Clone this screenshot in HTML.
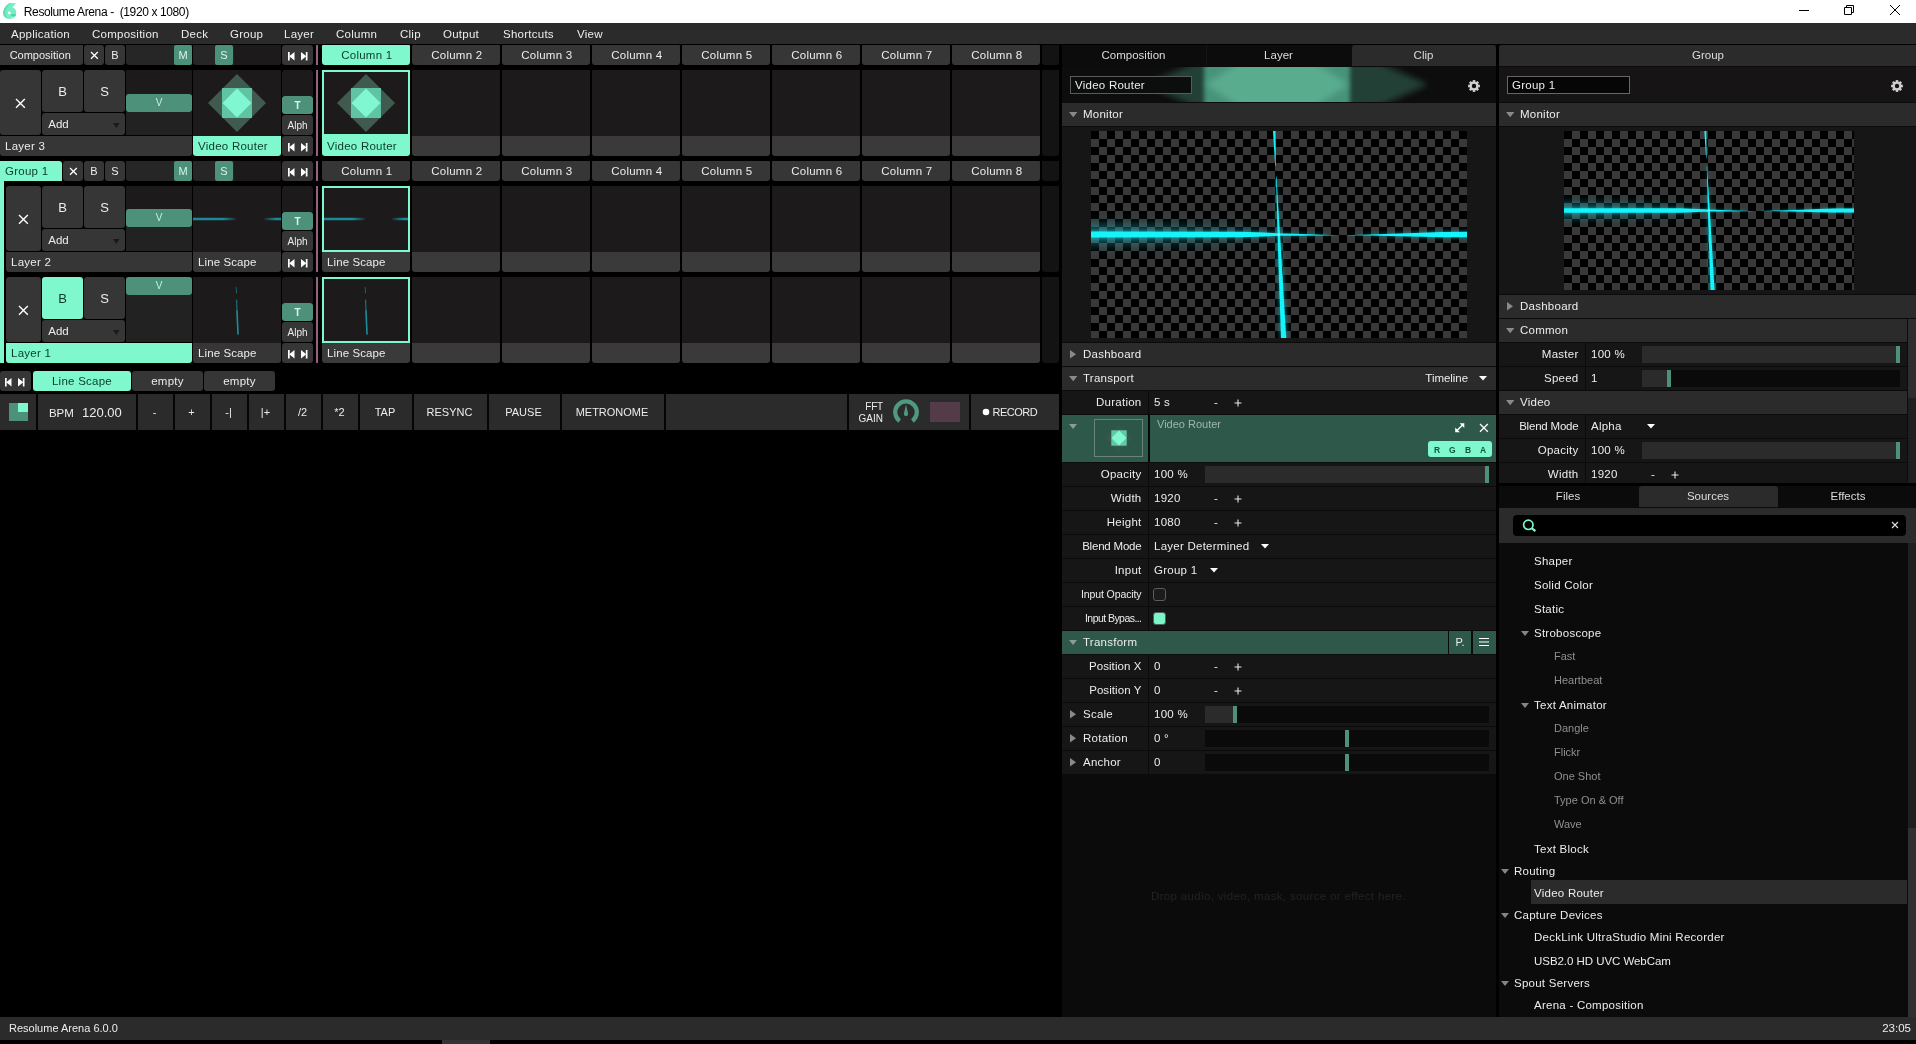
<!DOCTYPE html>
<html><head><meta charset="utf-8"><title>Resolume Arena</title>
<style>
html,body{margin:0;padding:0;background:#000;}
body{width:1916px;height:1044px;position:relative;overflow:hidden;font-family:"Liberation Sans",sans-serif;}
#app{position:absolute;left:0;top:0;width:1916px;height:1044px;will-change:transform;}
#app>div,#app>svg{position:absolute;}
.t{white-space:pre;}
svg{display:block;overflow:visible;}
</style></head><body><div id="app">
<div style="left:0px;top:0px;width:1916px;height:23px;background:#ffffff;"></div>
<svg style="left:0px;top:0px;" width="20" height="22" viewBox="0 0 20 22"><path d="M10.1 3L16 3.2L12.4 7.5C15 8.1 16.4 10.5 16.3 13C16.1 16.5 13.2 18.9 9.6 18.9C5.6 18.9 3 16.2 3.1 12.8C3.3 8.5 6.5 4.5 10.1 3Z" fill="#76eec4"/><path d="M3.6 10.5C4.6 7.3 7 4.4 10.1 3L11.2 3C8 5 5.6 8.6 5.3 12.5C5.1 15.2 6.2 17.3 8 18.7C5 18 3 15.8 3.1 12.8C3.1 12 3.3 11.2 3.6 10.5Z" fill="#5fdcb2"/><path d="M11.2 14.2L16.1 14.2C15.9 15.1 15.5 15.8 14.9 16.4L11.2 15.8Z" fill="#55cba3"/><circle cx="9.3" cy="12.9" r="1.4" fill="#f4fffb"/></svg>
<div class="t" style="top:2.5px;height:18px;line-height:18px;font-size:12.01px;color:#000;letter-spacing:-0.38px;left:23.8px;">Resolume Arena -  (1920 x 1080)</div>
<svg style="left:1799px;top:10px;" width="10" height="1" viewBox="0 0 10 1"><rect width="10" height="1" fill="#000"/></svg>
<svg style="left:1844px;top:5px;" width="10" height="10" viewBox="0 0 10 10"><path d="M2.5 2.5V0.5H9.5V7.5H7.5M0.5 2.5H7.5V9.5H0.5Z" stroke="#000" stroke-width="1" fill="none"/></svg>
<svg style="left:1890px;top:5px;" width="10" height="10" viewBox="0 0 10 10"><path d="M0 0L10 10M10 0L0 10" stroke="#000" stroke-width="1" fill="none"/></svg>
<div style="left:0px;top:23px;width:1916px;height:21px;background:#2b2b2b;"></div>
<div class="t" style="top:24.799999999999997px;height:18px;line-height:18px;font-size:11.5px;color:#ececec;letter-spacing:0.25px;left:11px;">Application</div>
<div class="t" style="top:24.799999999999997px;height:18px;line-height:18px;font-size:11.5px;color:#ececec;letter-spacing:0.25px;left:92px;">Composition</div>
<div class="t" style="top:24.799999999999997px;height:18px;line-height:18px;font-size:11.5px;color:#ececec;letter-spacing:0.25px;left:181px;">Deck</div>
<div class="t" style="top:24.799999999999997px;height:18px;line-height:18px;font-size:11.5px;color:#ececec;letter-spacing:0.25px;left:230px;">Group</div>
<div class="t" style="top:24.799999999999997px;height:18px;line-height:18px;font-size:11.5px;color:#ececec;letter-spacing:0.25px;left:284px;">Layer</div>
<div class="t" style="top:24.799999999999997px;height:18px;line-height:18px;font-size:11.5px;color:#ececec;letter-spacing:0.25px;left:336px;">Column</div>
<div class="t" style="top:24.799999999999997px;height:18px;line-height:18px;font-size:11.5px;color:#ececec;letter-spacing:0.25px;left:400px;">Clip</div>
<div class="t" style="top:24.799999999999997px;height:18px;line-height:18px;font-size:11.5px;color:#ececec;letter-spacing:0.25px;left:443px;">Output</div>
<div class="t" style="top:24.799999999999997px;height:18px;line-height:18px;font-size:11.5px;color:#ececec;letter-spacing:0.25px;left:503px;">Shortcuts</div>
<div class="t" style="top:24.799999999999997px;height:18px;line-height:18px;font-size:11.5px;color:#ececec;letter-spacing:0.25px;left:577px;">View</div>
<div style="left:0px;top:45px;width:83px;height:20px;background:#363636;border-radius:0 0 3px 0;"></div>
<div class="t" style="top:46.0px;height:18px;line-height:18px;font-size:11px;color:#ececec;left:-19.799999999999997px;width:120px;text-align:center;">Composition</div>
<div style="left:84px;top:45px;width:20px;height:20px;background:#363636;border-radius:3px;"></div>
<svg style="left:89.6px;top:50.6px;" width="8.8" height="8.8" viewBox="0 0 8.8 8.8"><path d="M1 1L7.8 7.8M7.8 1L1 7.8" stroke="#fff" stroke-width="1.3" fill="none"/></svg>
<div style="left:105px;top:45px;width:20px;height:20px;background:#363636;border-radius:3px;"></div>
<div class="t" style="top:46.0px;height:18px;line-height:18px;font-size:11px;color:#ececec;left:85.0px;width:60px;text-align:center;">B</div>
<div style="left:126px;top:45px;width:66px;height:20px;background:#262626;border-radius:0 0 3px 3px;"></div>
<div style="left:174px;top:45px;width:18px;height:20px;background:#4d917a;border-radius:2px;"></div>
<div class="t" style="top:46.0px;height:18px;line-height:18px;font-size:11px;color:#d6f5ea;left:154.0px;width:58px;text-align:center;">M</div>
<div style="left:193px;top:45px;width:88px;height:20px;background:#262626;border-radius:0 0 3px 3px;"></div>
<div style="left:234px;top:45px;width:47px;height:20px;background:#1c1a1a;border-radius:0 0 3px 0;"></div>
<div style="left:215px;top:45px;width:18px;height:20px;background:#4d917a;border-radius:2px;"></div>
<div class="t" style="top:46.0px;height:18px;line-height:18px;font-size:11px;color:#d6f5ea;left:195.0px;width:58px;text-align:center;">S</div>
<div style="left:282px;top:45px;width:31px;height:20px;background:#363636;border-radius:3px;"></div>
<svg style="left:287.75px;top:51.75px;" width="6.5" height="8.5" viewBox="0 0 6.5 8.5"><g fill="#fff"><rect x="0" y="0" width="1.7" height="8.5"/><path d="M6.5 0L6.5 8.5L1.2 4.25Z"/></g></svg>
<svg style="left:300.75px;top:51.75px;" width="6.5" height="8.5" viewBox="0 0 6.5 8.5"><g fill="#fff"><rect x="4.8" y="0" width="1.7" height="8.5"/><path d="M0 0L0 8.5L5.3 4.25Z"/></g></svg>
<div style="left:322px;top:45px;width:88px;height:20px;background:#7ff8ce;border-radius:1px 1px 3px 3px;"></div>
<div class="t" style="top:46.0px;height:18px;line-height:18px;font-size:11.5px;color:#0d3a2c;letter-spacing:0.25px;left:316.8px;width:100px;text-align:center;">Column 1</div>
<div style="left:412px;top:45px;width:88px;height:20px;background:#363636;border-radius:1px 1px 3px 3px;"></div>
<div class="t" style="top:46.0px;height:18px;line-height:18px;font-size:11.5px;color:#ececec;letter-spacing:0.25px;left:406.8px;width:100px;text-align:center;">Column 2</div>
<div style="left:502px;top:45px;width:88px;height:20px;background:#363636;border-radius:1px 1px 3px 3px;"></div>
<div class="t" style="top:46.0px;height:18px;line-height:18px;font-size:11.5px;color:#ececec;letter-spacing:0.25px;left:496.79999999999995px;width:100px;text-align:center;">Column 3</div>
<div style="left:592px;top:45px;width:88px;height:20px;background:#363636;border-radius:1px 1px 3px 3px;"></div>
<div class="t" style="top:46.0px;height:18px;line-height:18px;font-size:11.5px;color:#ececec;letter-spacing:0.25px;left:586.8px;width:100px;text-align:center;">Column 4</div>
<div style="left:682px;top:45px;width:88px;height:20px;background:#363636;border-radius:1px 1px 3px 3px;"></div>
<div class="t" style="top:46.0px;height:18px;line-height:18px;font-size:11.5px;color:#ececec;letter-spacing:0.25px;left:676.8px;width:100px;text-align:center;">Column 5</div>
<div style="left:772px;top:45px;width:88px;height:20px;background:#363636;border-radius:1px 1px 3px 3px;"></div>
<div class="t" style="top:46.0px;height:18px;line-height:18px;font-size:11.5px;color:#ececec;letter-spacing:0.25px;left:766.8px;width:100px;text-align:center;">Column 6</div>
<div style="left:862px;top:45px;width:88px;height:20px;background:#363636;border-radius:1px 1px 3px 3px;"></div>
<div class="t" style="top:46.0px;height:18px;line-height:18px;font-size:11.5px;color:#ececec;letter-spacing:0.25px;left:856.8px;width:100px;text-align:center;">Column 7</div>
<div style="left:952px;top:45px;width:88px;height:20px;background:#363636;border-radius:1px 1px 3px 3px;"></div>
<div class="t" style="top:46.0px;height:18px;line-height:18px;font-size:11.5px;color:#ececec;letter-spacing:0.25px;left:946.8px;width:100px;text-align:center;">Column 8</div>
<div style="left:1042px;top:45px;width:17px;height:20px;background:#131313;border-radius:0 0 3px 3px;"></div>
<div style="left:0px;top:70px;width:41px;height:65px;background:#363636;border-radius:3px;"></div>
<svg style="left:15.100000000000001px;top:97.8px;" width="10.8" height="10.8" viewBox="0 0 10.8 10.8"><path d="M1 1L9.8 9.8M9.8 1L1 9.8" stroke="#fff" stroke-width="1.4" fill="none"/></svg>
<div style="left:42px;top:70px;width:41px;height:42px;background:#363636;border-radius:3px;"></div>
<div class="t" style="top:82.8px;height:18px;line-height:18px;font-size:13px;color:#ececec;left:22.0px;width:81px;text-align:center;">B</div>
<div style="left:84px;top:70px;width:41px;height:42px;background:#363636;border-radius:3px;"></div>
<div class="t" style="top:82.8px;height:18px;line-height:18px;font-size:13px;color:#ececec;left:64.0px;width:81px;text-align:center;">S</div>
<div style="left:42px;top:113px;width:83px;height:22px;background:#363636;border-radius:3px;"></div>
<div class="t" style="top:114.8px;height:18px;line-height:18px;font-size:11.5px;color:#ececec;left:48.3px;">Add</div>
<svg style="left:112.6px;top:122.8px;" width="6.6" height="5" viewBox="0 0 6.6 5"><path d="M0 0H6.6L3.3 5Z" fill="#1a1a1a"/></svg>
<div style="left:126px;top:70px;width:66px;height:65px;background:#1c1a1a;"></div>
<div style="left:126px;top:112px;width:66px;height:23px;background:#232222;"></div>
<div style="left:126px;top:94px;width:66px;height:18px;background:#4d917a;border-radius:3px;"></div>
<div class="t" style="top:94.0px;height:18px;line-height:18px;font-size:10px;color:#c9efe2;left:106.0px;width:106px;text-align:center;">V</div>
<div style="left:193px;top:70px;width:88px;height:66px;background:#1c1a1a;"></div>
<div style="left:282px;top:70px;width:31px;height:26px;background:#1c1a1a;border-radius:3px 3px 0 0;"></div>
<div style="left:282px;top:96px;width:31px;height:18px;background:#4d917a;border-radius:3px;"></div>
<div class="t" style="top:96.5px;height:18px;line-height:18px;font-size:10px;color:#d6f5ea;font-weight:bold;left:262.0px;width:71px;text-align:center;">T</div>
<div style="left:282px;top:115px;width:31px;height:20px;background:#363636;border-radius:3px;"></div>
<div class="t" style="top:116.8px;height:18px;line-height:18px;font-size:10px;color:#ececec;left:262.0px;width:71px;text-align:center;">Alph</div>
<div style="left:282px;top:136px;width:31px;height:20px;background:#363636;border-radius:3px;"></div>
<svg style="left:287.75px;top:142.75px;" width="6.5" height="8.5" viewBox="0 0 6.5 8.5"><g fill="#fff"><rect x="0" y="0" width="1.7" height="8.5"/><path d="M6.5 0L6.5 8.5L1.2 4.25Z"/></g></svg>
<svg style="left:300.75px;top:142.75px;" width="6.5" height="8.5" viewBox="0 0 6.5 8.5"><g fill="#fff"><rect x="4.8" y="0" width="1.7" height="8.5"/><path d="M0 0L0 8.5L5.3 4.25Z"/></g></svg>
<div style="left:0px;top:136px;width:192px;height:20px;background:#363636;border-radius:0 0 3px 3px;"></div>
<div class="t" style="top:137.0px;height:18px;line-height:18px;font-size:11.5px;color:#ececec;letter-spacing:0.25px;left:5px;">Layer 3</div>
<div style="left:412px;top:70px;width:88px;height:66px;background:#1c1a1a;"></div>
<div style="left:412px;top:136px;width:88px;height:20px;background:#3a3a3a;border-radius:0 0 3px 3px;"></div>
<div style="left:502px;top:70px;width:88px;height:66px;background:#1c1a1a;"></div>
<div style="left:502px;top:136px;width:88px;height:20px;background:#3a3a3a;border-radius:0 0 3px 3px;"></div>
<div style="left:592px;top:70px;width:88px;height:66px;background:#1c1a1a;"></div>
<div style="left:592px;top:136px;width:88px;height:20px;background:#3a3a3a;border-radius:0 0 3px 3px;"></div>
<div style="left:682px;top:70px;width:88px;height:66px;background:#1c1a1a;"></div>
<div style="left:682px;top:136px;width:88px;height:20px;background:#3a3a3a;border-radius:0 0 3px 3px;"></div>
<div style="left:772px;top:70px;width:88px;height:66px;background:#1c1a1a;"></div>
<div style="left:772px;top:136px;width:88px;height:20px;background:#3a3a3a;border-radius:0 0 3px 3px;"></div>
<div style="left:862px;top:70px;width:88px;height:66px;background:#1c1a1a;"></div>
<div style="left:862px;top:136px;width:88px;height:20px;background:#3a3a3a;border-radius:0 0 3px 3px;"></div>
<div style="left:952px;top:70px;width:88px;height:66px;background:#1c1a1a;"></div>
<div style="left:952px;top:136px;width:88px;height:20px;background:#3a3a3a;border-radius:0 0 3px 3px;"></div>
<div style="left:1042px;top:70px;width:17px;height:86px;background:#131313;border-radius:0 0 3px 3px;"></div>
<svg style="left:208.0px;top:74.0px;" width="58.0" height="58.0" viewBox="0 0 58.0 58.0"><path d="M29.0 0L58.0 29.0L29.0 58.0L0 29.0Z" fill="#3f5b50"/><rect x="14.0" y="14.0" width="30.0" height="30.0" fill="#60c4a4"/><path d="M29.0 14.5L43.5 29.0L29.0 43.5L14.5 29.0Z" fill="#80f7d0"/></svg>
<div style="left:193px;top:136px;width:88px;height:20px;background:#7ff8ce;border-radius:0 0 3px 3px;"></div>
<div class="t" style="top:137.0px;height:18px;line-height:18px;font-size:11.5px;color:#0d3a2c;letter-spacing:0.25px;left:198px;">Video Router</div>
<div style="left:322px;top:70px;width:88px;height:86px;background:#7ff8ce;border-radius:0 0 3px 3px;"></div>
<div style="left:324px;top:72px;width:84px;height:62px;background:#1c1a1a;"></div>
<svg style="left:337.0px;top:74.0px;" width="58.0" height="58.0" viewBox="0 0 58.0 58.0"><path d="M29.0 0L58.0 29.0L29.0 58.0L0 29.0Z" fill="#3f5b50"/><rect x="14.0" y="14.0" width="30.0" height="30.0" fill="#60c4a4"/><path d="M29.0 14.5L43.5 29.0L29.0 43.5L14.5 29.0Z" fill="#80f7d0"/></svg>
<div class="t" style="top:137.0px;height:18px;line-height:18px;font-size:11.5px;color:#0d3a2c;letter-spacing:0.25px;left:327px;">Video Router</div>
<div style="left:0px;top:161px;width:62px;height:20px;background:#7ff8ce;border-radius:0 3px 0 0;"></div>
<div class="t" style="top:162.0px;height:18px;line-height:18px;font-size:11.5px;color:#0d3a2c;letter-spacing:0.25px;left:5px;">Group 1</div>
<div style="left:63px;top:161px;width:20px;height:20px;background:#363636;border-radius:3px;"></div>
<svg style="left:68.6px;top:166.6px;" width="8.8" height="8.8" viewBox="0 0 8.8 8.8"><path d="M1 1L7.8 7.8M7.8 1L1 7.8" stroke="#fff" stroke-width="1.3" fill="none"/></svg>
<div style="left:84px;top:161px;width:20px;height:20px;background:#363636;border-radius:3px;"></div>
<div class="t" style="top:162.0px;height:18px;line-height:18px;font-size:11px;color:#ececec;left:64.0px;width:60px;text-align:center;">B</div>
<div style="left:105px;top:161px;width:20px;height:20px;background:#363636;border-radius:3px;"></div>
<div class="t" style="top:162.0px;height:18px;line-height:18px;font-size:11px;color:#ececec;left:85.0px;width:60px;text-align:center;">S</div>
<div style="left:126px;top:161px;width:66px;height:20px;background:#262626;border-radius:0 0 3px 3px;"></div>
<div style="left:174px;top:161px;width:18px;height:20px;background:#4d917a;border-radius:2px;"></div>
<div class="t" style="top:162.0px;height:18px;line-height:18px;font-size:11px;color:#d6f5ea;left:154.0px;width:58px;text-align:center;">M</div>
<div style="left:193px;top:161px;width:88px;height:20px;background:#262626;border-radius:0 0 3px 3px;"></div>
<div style="left:234px;top:161px;width:47px;height:20px;background:#1c1a1a;border-radius:0 0 3px 0;"></div>
<div style="left:215px;top:161px;width:18px;height:20px;background:#4d917a;border-radius:2px;"></div>
<div class="t" style="top:162.0px;height:18px;line-height:18px;font-size:11px;color:#d6f5ea;left:195.0px;width:58px;text-align:center;">S</div>
<div style="left:282px;top:161px;width:31px;height:20px;background:#363636;border-radius:3px;"></div>
<svg style="left:287.75px;top:167.75px;" width="6.5" height="8.5" viewBox="0 0 6.5 8.5"><g fill="#fff"><rect x="0" y="0" width="1.7" height="8.5"/><path d="M6.5 0L6.5 8.5L1.2 4.25Z"/></g></svg>
<svg style="left:300.75px;top:167.75px;" width="6.5" height="8.5" viewBox="0 0 6.5 8.5"><g fill="#fff"><rect x="4.8" y="0" width="1.7" height="8.5"/><path d="M0 0L0 8.5L5.3 4.25Z"/></g></svg>
<div style="left:322px;top:161px;width:88px;height:20px;background:#363636;border-radius:1px 1px 3px 3px;"></div>
<div class="t" style="top:162.0px;height:18px;line-height:18px;font-size:11.5px;color:#ececec;letter-spacing:0.25px;left:316.8px;width:100px;text-align:center;">Column 1</div>
<div style="left:412px;top:161px;width:88px;height:20px;background:#363636;border-radius:1px 1px 3px 3px;"></div>
<div class="t" style="top:162.0px;height:18px;line-height:18px;font-size:11.5px;color:#ececec;letter-spacing:0.25px;left:406.8px;width:100px;text-align:center;">Column 2</div>
<div style="left:502px;top:161px;width:88px;height:20px;background:#363636;border-radius:1px 1px 3px 3px;"></div>
<div class="t" style="top:162.0px;height:18px;line-height:18px;font-size:11.5px;color:#ececec;letter-spacing:0.25px;left:496.79999999999995px;width:100px;text-align:center;">Column 3</div>
<div style="left:592px;top:161px;width:88px;height:20px;background:#363636;border-radius:1px 1px 3px 3px;"></div>
<div class="t" style="top:162.0px;height:18px;line-height:18px;font-size:11.5px;color:#ececec;letter-spacing:0.25px;left:586.8px;width:100px;text-align:center;">Column 4</div>
<div style="left:682px;top:161px;width:88px;height:20px;background:#363636;border-radius:1px 1px 3px 3px;"></div>
<div class="t" style="top:162.0px;height:18px;line-height:18px;font-size:11.5px;color:#ececec;letter-spacing:0.25px;left:676.8px;width:100px;text-align:center;">Column 5</div>
<div style="left:772px;top:161px;width:88px;height:20px;background:#363636;border-radius:1px 1px 3px 3px;"></div>
<div class="t" style="top:162.0px;height:18px;line-height:18px;font-size:11.5px;color:#ececec;letter-spacing:0.25px;left:766.8px;width:100px;text-align:center;">Column 6</div>
<div style="left:862px;top:161px;width:88px;height:20px;background:#363636;border-radius:1px 1px 3px 3px;"></div>
<div class="t" style="top:162.0px;height:18px;line-height:18px;font-size:11.5px;color:#ececec;letter-spacing:0.25px;left:856.8px;width:100px;text-align:center;">Column 7</div>
<div style="left:952px;top:161px;width:88px;height:20px;background:#363636;border-radius:1px 1px 3px 3px;"></div>
<div class="t" style="top:162.0px;height:18px;line-height:18px;font-size:11.5px;color:#ececec;letter-spacing:0.25px;left:946.8px;width:100px;text-align:center;">Column 8</div>
<div style="left:1042px;top:161px;width:17px;height:20px;background:#131313;border-radius:0 0 3px 3px;"></div>
<div style="left:0px;top:181px;width:4px;height:182px;background:#7ff8ce;"></div>
<div style="left:6px;top:186px;width:35px;height:65px;background:#363636;border-radius:3px;"></div>
<svg style="left:18.1px;top:213.79999999999998px;" width="10.8" height="10.8" viewBox="0 0 10.8 10.8"><path d="M1 1L9.8 9.8M9.8 1L1 9.8" stroke="#fff" stroke-width="1.4" fill="none"/></svg>
<div style="left:42px;top:186px;width:41px;height:42px;background:#363636;border-radius:3px;"></div>
<div class="t" style="top:198.8px;height:18px;line-height:18px;font-size:13px;color:#ececec;left:22.0px;width:81px;text-align:center;">B</div>
<div style="left:84px;top:186px;width:41px;height:42px;background:#363636;border-radius:3px;"></div>
<div class="t" style="top:198.8px;height:18px;line-height:18px;font-size:13px;color:#ececec;left:64.0px;width:81px;text-align:center;">S</div>
<div style="left:42px;top:229px;width:83px;height:22px;background:#363636;border-radius:3px;"></div>
<div class="t" style="top:230.8px;height:18px;line-height:18px;font-size:11.5px;color:#ececec;left:48.3px;">Add</div>
<svg style="left:112.6px;top:238.8px;" width="6.6" height="5" viewBox="0 0 6.6 5"><path d="M0 0H6.6L3.3 5Z" fill="#1a1a1a"/></svg>
<div style="left:126px;top:186px;width:66px;height:65px;background:#1c1a1a;"></div>
<div style="left:126px;top:227px;width:66px;height:24px;background:#232222;"></div>
<div style="left:126px;top:209px;width:66px;height:18px;background:#4d917a;border-radius:3px;"></div>
<div class="t" style="top:209.0px;height:18px;line-height:18px;font-size:10px;color:#c9efe2;left:106.0px;width:106px;text-align:center;">V</div>
<div style="left:193px;top:186px;width:88px;height:66px;background:#1c1a1a;"></div>
<div style="left:282px;top:186px;width:31px;height:26px;background:#1c1a1a;border-radius:3px 3px 0 0;"></div>
<div style="left:282px;top:212px;width:31px;height:18px;background:#4d917a;border-radius:3px;"></div>
<div class="t" style="top:212.5px;height:18px;line-height:18px;font-size:10px;color:#d6f5ea;font-weight:bold;left:262.0px;width:71px;text-align:center;">T</div>
<div style="left:282px;top:231px;width:31px;height:20px;background:#363636;border-radius:3px;"></div>
<div class="t" style="top:232.8px;height:18px;line-height:18px;font-size:10px;color:#ececec;left:262.0px;width:71px;text-align:center;">Alph</div>
<div style="left:282px;top:252px;width:31px;height:20px;background:#363636;border-radius:3px;"></div>
<svg style="left:287.75px;top:258.75px;" width="6.5" height="8.5" viewBox="0 0 6.5 8.5"><g fill="#fff"><rect x="0" y="0" width="1.7" height="8.5"/><path d="M6.5 0L6.5 8.5L1.2 4.25Z"/></g></svg>
<svg style="left:300.75px;top:258.75px;" width="6.5" height="8.5" viewBox="0 0 6.5 8.5"><g fill="#fff"><rect x="4.8" y="0" width="1.7" height="8.5"/><path d="M0 0L0 8.5L5.3 4.25Z"/></g></svg>
<div style="left:6px;top:252px;width:186px;height:20px;background:#363636;border-radius:0 0 3px 3px;"></div>
<div class="t" style="top:253.0px;height:18px;line-height:18px;font-size:11.5px;color:#ececec;letter-spacing:0.25px;left:11px;">Layer 2</div>
<div style="left:412px;top:186px;width:88px;height:66px;background:#1c1a1a;"></div>
<div style="left:412px;top:252px;width:88px;height:20px;background:#3a3a3a;border-radius:0 0 3px 3px;"></div>
<div style="left:502px;top:186px;width:88px;height:66px;background:#1c1a1a;"></div>
<div style="left:502px;top:252px;width:88px;height:20px;background:#3a3a3a;border-radius:0 0 3px 3px;"></div>
<div style="left:592px;top:186px;width:88px;height:66px;background:#1c1a1a;"></div>
<div style="left:592px;top:252px;width:88px;height:20px;background:#3a3a3a;border-radius:0 0 3px 3px;"></div>
<div style="left:682px;top:186px;width:88px;height:66px;background:#1c1a1a;"></div>
<div style="left:682px;top:252px;width:88px;height:20px;background:#3a3a3a;border-radius:0 0 3px 3px;"></div>
<div style="left:772px;top:186px;width:88px;height:66px;background:#1c1a1a;"></div>
<div style="left:772px;top:252px;width:88px;height:20px;background:#3a3a3a;border-radius:0 0 3px 3px;"></div>
<div style="left:862px;top:186px;width:88px;height:66px;background:#1c1a1a;"></div>
<div style="left:862px;top:252px;width:88px;height:20px;background:#3a3a3a;border-radius:0 0 3px 3px;"></div>
<div style="left:952px;top:186px;width:88px;height:66px;background:#1c1a1a;"></div>
<div style="left:952px;top:252px;width:88px;height:20px;background:#3a3a3a;border-radius:0 0 3px 3px;"></div>
<div style="left:1042px;top:186px;width:17px;height:86px;background:#131313;border-radius:0 0 3px 3px;"></div>
<div style="left:193px;top:252px;width:88px;height:20px;background:#363636;border-radius:0 0 3px 3px;"></div>
<div class="t" style="top:253.0px;height:18px;line-height:18px;font-size:11.5px;color:#ececec;letter-spacing:0.1px;left:198px;">Line Scape</div>
<div style="left:322px;top:186px;width:88px;height:66px;background:#7ff8ce;"></div>
<div style="left:324px;top:188px;width:84px;height:62px;background:#1c1a1a;"></div>
<div style="left:322px;top:252px;width:88px;height:20px;background:#3a3a3a;border-radius:0 0 3px 3px;"></div>
<div class="t" style="top:253.0px;height:18px;line-height:18px;font-size:11.5px;color:#ececec;letter-spacing:0.1px;left:327px;">Line Scape</div>
<svg style="left:193px;top:217px;" width="88" height="4" viewBox="0 0 88 4"><defs><linearGradient id="hl193" x1="0" x2="1"><stop offset="0" stop-color="#1a9cae"/><stop offset="0.34" stop-color="#1a9cae"/><stop offset="0.5" stop-color="#1a9cae" stop-opacity="0"/><stop offset="0.8" stop-color="#1a9cae" stop-opacity="0"/><stop offset="0.95" stop-color="#1a9cae"/><stop offset="1" stop-color="#1a9cae"/></linearGradient></defs><rect x="0" y="0.4" width="88" height="3.2" fill="url(#hl193)" opacity="0.35"/><rect x="0" y="1.1" width="88" height="1.8" fill="url(#hl193)" opacity="0.85"/></svg>
<svg style="left:324px;top:217px;" width="84" height="4" viewBox="0 0 84 4"><defs><linearGradient id="hl324" x1="0" x2="1"><stop offset="0" stop-color="#1a9cae"/><stop offset="0.34" stop-color="#1a9cae"/><stop offset="0.5" stop-color="#1a9cae" stop-opacity="0"/><stop offset="0.8" stop-color="#1a9cae" stop-opacity="0"/><stop offset="0.95" stop-color="#1a9cae"/><stop offset="1" stop-color="#1a9cae"/></linearGradient></defs><rect x="0" y="0.4" width="84" height="3.2" fill="url(#hl324)" opacity="0.35"/><rect x="0" y="1.1" width="84" height="1.8" fill="url(#hl324)" opacity="0.85"/></svg>
<div style="left:6px;top:277px;width:35px;height:65px;background:#363636;border-radius:3px;"></div>
<svg style="left:18.1px;top:304.8px;" width="10.8" height="10.8" viewBox="0 0 10.8 10.8"><path d="M1 1L9.8 9.8M9.8 1L1 9.8" stroke="#fff" stroke-width="1.4" fill="none"/></svg>
<div style="left:42px;top:277px;width:41px;height:42px;background:#7ff8ce;border-radius:3px;"></div>
<div class="t" style="top:289.8px;height:18px;line-height:18px;font-size:13px;color:#0d3a2c;left:22.0px;width:81px;text-align:center;">B</div>
<div style="left:84px;top:277px;width:41px;height:42px;background:#363636;border-radius:3px;"></div>
<div class="t" style="top:289.8px;height:18px;line-height:18px;font-size:13px;color:#ececec;left:64.0px;width:81px;text-align:center;">S</div>
<div style="left:42px;top:320px;width:83px;height:22px;background:#363636;border-radius:3px;"></div>
<div class="t" style="top:321.8px;height:18px;line-height:18px;font-size:11.5px;color:#ececec;left:48.3px;">Add</div>
<svg style="left:112.6px;top:329.8px;" width="6.6" height="5" viewBox="0 0 6.6 5"><path d="M0 0H6.6L3.3 5Z" fill="#1a1a1a"/></svg>
<div style="left:126px;top:277px;width:66px;height:65px;background:#1c1a1a;"></div>
<div style="left:126px;top:295px;width:66px;height:47px;background:#232222;"></div>
<div style="left:126px;top:277px;width:66px;height:18px;background:#4d917a;border-radius:3px;"></div>
<div class="t" style="top:277.0px;height:18px;line-height:18px;font-size:10px;color:#c9efe2;left:106.0px;width:106px;text-align:center;">V</div>
<div style="left:193px;top:277px;width:88px;height:66px;background:#1c1a1a;"></div>
<div style="left:282px;top:277px;width:31px;height:26px;background:#1c1a1a;border-radius:3px 3px 0 0;"></div>
<div style="left:282px;top:303px;width:31px;height:18px;background:#4d917a;border-radius:3px;"></div>
<div class="t" style="top:303.5px;height:18px;line-height:18px;font-size:10px;color:#d6f5ea;font-weight:bold;left:262.0px;width:71px;text-align:center;">T</div>
<div style="left:282px;top:322px;width:31px;height:20px;background:#363636;border-radius:3px;"></div>
<div class="t" style="top:323.8px;height:18px;line-height:18px;font-size:10px;color:#ececec;left:262.0px;width:71px;text-align:center;">Alph</div>
<div style="left:282px;top:343px;width:31px;height:20px;background:#363636;border-radius:3px;"></div>
<svg style="left:287.75px;top:349.75px;" width="6.5" height="8.5" viewBox="0 0 6.5 8.5"><g fill="#fff"><rect x="0" y="0" width="1.7" height="8.5"/><path d="M6.5 0L6.5 8.5L1.2 4.25Z"/></g></svg>
<svg style="left:300.75px;top:349.75px;" width="6.5" height="8.5" viewBox="0 0 6.5 8.5"><g fill="#fff"><rect x="4.8" y="0" width="1.7" height="8.5"/><path d="M0 0L0 8.5L5.3 4.25Z"/></g></svg>
<div style="left:6px;top:343px;width:186px;height:20px;background:#7ff8ce;border-radius:0 0 3px 3px;"></div>
<div class="t" style="top:344.0px;height:18px;line-height:18px;font-size:11.5px;color:#0d3a2c;letter-spacing:0.25px;left:11px;">Layer 1</div>
<div style="left:412px;top:277px;width:88px;height:66px;background:#1c1a1a;"></div>
<div style="left:412px;top:343px;width:88px;height:20px;background:#3a3a3a;border-radius:0 0 3px 3px;"></div>
<div style="left:502px;top:277px;width:88px;height:66px;background:#1c1a1a;"></div>
<div style="left:502px;top:343px;width:88px;height:20px;background:#3a3a3a;border-radius:0 0 3px 3px;"></div>
<div style="left:592px;top:277px;width:88px;height:66px;background:#1c1a1a;"></div>
<div style="left:592px;top:343px;width:88px;height:20px;background:#3a3a3a;border-radius:0 0 3px 3px;"></div>
<div style="left:682px;top:277px;width:88px;height:66px;background:#1c1a1a;"></div>
<div style="left:682px;top:343px;width:88px;height:20px;background:#3a3a3a;border-radius:0 0 3px 3px;"></div>
<div style="left:772px;top:277px;width:88px;height:66px;background:#1c1a1a;"></div>
<div style="left:772px;top:343px;width:88px;height:20px;background:#3a3a3a;border-radius:0 0 3px 3px;"></div>
<div style="left:862px;top:277px;width:88px;height:66px;background:#1c1a1a;"></div>
<div style="left:862px;top:343px;width:88px;height:20px;background:#3a3a3a;border-radius:0 0 3px 3px;"></div>
<div style="left:952px;top:277px;width:88px;height:66px;background:#1c1a1a;"></div>
<div style="left:952px;top:343px;width:88px;height:20px;background:#3a3a3a;border-radius:0 0 3px 3px;"></div>
<div style="left:1042px;top:277px;width:17px;height:86px;background:#131313;border-radius:0 0 3px 3px;"></div>
<div style="left:193px;top:343px;width:88px;height:20px;background:#363636;border-radius:0 0 3px 3px;"></div>
<div class="t" style="top:344.0px;height:18px;line-height:18px;font-size:11.5px;color:#ececec;letter-spacing:0.1px;left:198px;">Line Scape</div>
<div style="left:322px;top:277px;width:88px;height:66px;background:#7ff8ce;"></div>
<div style="left:324px;top:279px;width:84px;height:62px;background:#1c1a1a;"></div>
<div style="left:322px;top:343px;width:88px;height:20px;background:#3a3a3a;border-radius:0 0 3px 3px;"></div>
<div class="t" style="top:344.0px;height:18px;line-height:18px;font-size:11.5px;color:#ececec;letter-spacing:0.1px;left:327px;">Line Scape</div>
<svg style="left:234px;top:287px;" width="8" height="50" viewBox="0 0 8 50"><g stroke="#1c9aab" fill="none" stroke-linecap="round" opacity="0.9"><path d="M2.2 0.5L2.5 6" stroke-width="0.9" opacity="0.7"/><path d="M2.6 13L3 24" stroke-width="1.1" opacity="0.8"/><path d="M3 24L4 47" stroke-width="1.6"/></g></svg>
<svg style="left:363px;top:287px;" width="8" height="50" viewBox="0 0 8 50"><g stroke="#1c9aab" fill="none" stroke-linecap="round" opacity="0.9"><path d="M2.2 0.5L2.5 6" stroke-width="0.9" opacity="0.7"/><path d="M2.6 13L3 24" stroke-width="1.1" opacity="0.8"/><path d="M3 24L4 47" stroke-width="1.6"/></g></svg>
<div style="left:316px;top:45px;width:2px;height:20px;background:#96607f;"></div>
<div style="left:316px;top:70px;width:2px;height:86px;background:#96607f;"></div>
<div style="left:316px;top:161px;width:2px;height:20px;background:#96607f;"></div>
<div style="left:316px;top:186px;width:2px;height:86px;background:#96607f;"></div>
<div style="left:316px;top:277px;width:2px;height:86px;background:#96607f;"></div>
<div style="left:0px;top:371px;width:31px;height:20px;background:#363636;border-radius:3px;"></div>
<svg style="left:5.449999999999999px;top:377.75px;" width="6.5" height="8.5" viewBox="0 0 6.5 8.5"><g fill="#fff"><rect x="0" y="0" width="1.7" height="8.5"/><path d="M6.5 0L6.5 8.5L1.2 4.25Z"/></g></svg>
<svg style="left:18.45px;top:377.75px;" width="6.5" height="8.5" viewBox="0 0 6.5 8.5"><g fill="#fff"><rect x="4.8" y="0" width="1.7" height="8.5"/><path d="M0 0L0 8.5L5.3 4.25Z"/></g></svg>
<div style="left:33px;top:371px;width:98px;height:20px;background:#7ff8ce;border-radius:3px;"></div>
<div class="t" style="top:372.0px;height:18px;line-height:18px;font-size:11.5px;color:#0d3a2c;letter-spacing:0.25px;left:13.0px;width:138px;text-align:center;">Line Scape</div>
<div style="left:132px;top:371px;width:71px;height:20px;background:#363636;border-radius:3px;"></div>
<div class="t" style="top:372.0px;height:18px;line-height:18px;font-size:11.5px;color:#ececec;letter-spacing:0.25px;left:112.0px;width:111px;text-align:center;">empty</div>
<div style="left:204px;top:371px;width:71px;height:20px;background:#363636;border-radius:3px;"></div>
<div class="t" style="top:372.0px;height:18px;line-height:18px;font-size:11.5px;color:#ececec;letter-spacing:0.25px;left:184.0px;width:111px;text-align:center;">empty</div>
<div style="left:0px;top:394px;width:1059px;height:36px;background:#2b2b2b;"></div>
<div style="left:36px;top:394px;width:1.5px;height:36px;background:#050505;"></div>
<div style="left:136px;top:394px;width:1.5px;height:36px;background:#050505;"></div>
<div style="left:173px;top:394px;width:1.5px;height:36px;background:#050505;"></div>
<div style="left:210px;top:394px;width:1.5px;height:36px;background:#050505;"></div>
<div style="left:247px;top:394px;width:1.5px;height:36px;background:#050505;"></div>
<div style="left:284px;top:394px;width:1.5px;height:36px;background:#050505;"></div>
<div style="left:321px;top:394px;width:1.5px;height:36px;background:#050505;"></div>
<div style="left:358px;top:394px;width:1.5px;height:36px;background:#050505;"></div>
<div style="left:412px;top:394px;width:1.5px;height:36px;background:#050505;"></div>
<div style="left:487px;top:394px;width:1.5px;height:36px;background:#050505;"></div>
<div style="left:560px;top:394px;width:1.5px;height:36px;background:#050505;"></div>
<div style="left:664px;top:394px;width:1.5px;height:36px;background:#050505;"></div>
<div style="left:847px;top:394px;width:1.5px;height:36px;background:#050505;"></div>
<div style="left:969px;top:394px;width:1.5px;height:36px;background:#050505;"></div>
<div style="left:9px;top:403px;width:19px;height:18px;background:#4d917a;"></div>
<div style="left:18px;top:403px;width:10px;height:9px;background:#7ff8ce;"></div>
<div class="t" style="top:404.0px;height:18px;line-height:18px;font-size:11.5px;color:#ececec;letter-spacing:-0.05px;left:49px;">BPM</div>
<div class="t" style="top:404.0px;height:18px;line-height:18px;font-size:13px;color:#ececec;left:82px;">120.00</div>
<div class="t" style="top:403.0px;height:18px;line-height:18px;font-size:11px;color:#ececec;left:94.5px;width:120px;text-align:center;">-</div>
<div class="t" style="top:403.0px;height:18px;line-height:18px;font-size:11px;color:#ececec;left:131.5px;width:120px;text-align:center;">+</div>
<div class="t" style="top:403.0px;height:18px;line-height:18px;font-size:11px;color:#ececec;left:168.5px;width:120px;text-align:center;">-|</div>
<div class="t" style="top:403.0px;height:18px;line-height:18px;font-size:11px;color:#ececec;left:205.5px;width:120px;text-align:center;">|+</div>
<div class="t" style="top:403.0px;height:18px;line-height:18px;font-size:11px;color:#ececec;left:242.5px;width:120px;text-align:center;">/2</div>
<div class="t" style="top:403.0px;height:18px;line-height:18px;font-size:11px;color:#ececec;left:279.5px;width:120px;text-align:center;">*2</div>
<div class="t" style="top:403.0px;height:18px;line-height:18px;font-size:11px;color:#ececec;left:325.0px;width:120px;text-align:center;">TAP</div>
<div class="t" style="top:403.0px;height:18px;line-height:18px;font-size:11px;color:#ececec;left:389.5px;width:120px;text-align:center;">RESYNC</div>
<div class="t" style="top:403.0px;height:18px;line-height:18px;font-size:11px;color:#ececec;left:463.5px;width:120px;text-align:center;">PAUSE</div>
<div class="t" style="top:403.0px;height:18px;line-height:18px;font-size:11px;color:#ececec;left:552.0px;width:120px;text-align:center;">METRONOME</div>
<div class="t" style="top:398.0px;height:18px;line-height:18px;font-size:10px;color:#ececec;letter-spacing:-0.2px;right:1033px;text-align:right;">FFT</div>
<div class="t" style="top:410.0px;height:18px;line-height:18px;font-size:10px;color:#ececec;right:1033px;text-align:right;">GAIN</div>
<svg style="left:892px;top:398px;" width="28" height="28" viewBox="0 0 28 28"><path d="M7.65 22.94A10.8 10.8 0 1 1 20.35 22.94" stroke="#4d9a81" stroke-width="4.2" fill="none"/><path d="M14 6.6L16 15.3A2.1 2.1 0 1 1 12 15.3Z" fill="#4d9a81"/></svg>
<div style="left:930px;top:402px;width:30px;height:20px;background:#533b48;"></div>
<svg style="left:982.2px;top:407.6px;" width="8" height="8" viewBox="0 0 8 8"><circle cx="4" cy="4" r="3.3" fill="#fff"/></svg>
<div class="t" style="top:403.0px;height:18px;line-height:18px;font-size:11px;color:#ececec;letter-spacing:-0.5px;left:992.5px;">RECORD</div>
<div style="left:1062px;top:45px;width:434px;height:972px;background:#0c0b0b;"></div>
<div style="left:1062px;top:45px;width:144px;height:21px;background:#0d0c0c;"></div>
<div style="left:1207px;top:45px;width:144px;height:21px;background:#0d0c0c;"></div>
<div style="left:1352px;top:45px;width:144px;height:21px;background:#2b2b2b;border-radius:3px 3px 0 0;"></div>
<div style="left:1206px;top:45px;width:1px;height:21px;background:#161616;"></div>
<div class="t" style="top:46.0px;height:18px;line-height:18px;font-size:11.5px;color:#dcdcdc;left:1063.5px;width:140px;text-align:center;">Composition</div>
<div class="t" style="top:46.0px;height:18px;line-height:18px;font-size:11.5px;color:#dcdcdc;left:1208.5px;width:140px;text-align:center;">Layer</div>
<div class="t" style="top:46.0px;height:18px;line-height:18px;font-size:11.5px;color:#dcdcdc;left:1353.5px;width:140px;text-align:center;">Clip</div>
<div style="left:1062px;top:67px;width:434px;height:35px;background:#0e0d0d;"></div>
<svg style="left:1062px;top:67px" width="434" height="35" viewBox="1062 67 434 35"><defs><filter id="b3" x="-20%" y="-50%" width="140%" height="200%"><feGaussianBlur stdDeviation="3"/></filter><filter id="b2" x="-20%" y="-50%" width="140%" height="200%"><feGaussianBlur stdDeviation="2.2 0.1"/></filter><clipPath id="nrc"><rect x="1062" y="67" width="434" height="35"/></clipPath></defs><g clip-path="url(#nrc)"><path d="M1146 84.5L1196 62L1378 62L1428 84.5L1378 107L1196 107Z" fill="#243f36" filter="url(#b3)"/><rect x="1204" y="60" width="146" height="50" fill="#46937a" filter="url(#b2)"/><path d="M1206 84.5L1240 62L1314 62L1348 84.5L1314 107L1240 107Z" fill="#5aac8f" filter="url(#b3)"/></g></svg>
<div style="left:1070px;top:76px;width:122px;height:18px;background:#0c0e0d;box-sizing:border-box;border:1px solid #5a5a5a;"></div>
<div class="t" style="top:76.0px;height:18px;line-height:18px;font-size:11.5px;color:#ececec;letter-spacing:0.25px;left:1075px;">Video Router</div>
<svg style="left:1466.5px;top:78.5px;" width="14" height="14" viewBox="0 0 14 14"><g transform="translate(7 7)" fill="#cfcfcf"><rect x="-1.3" y="-5.9" width="2.6" height="3" transform="rotate(0)"/><rect x="-1.3" y="-5.9" width="2.6" height="3" transform="rotate(45)"/><rect x="-1.3" y="-5.9" width="2.6" height="3" transform="rotate(90)"/><rect x="-1.3" y="-5.9" width="2.6" height="3" transform="rotate(135)"/><rect x="-1.3" y="-5.9" width="2.6" height="3" transform="rotate(180)"/><rect x="-1.3" y="-5.9" width="2.6" height="3" transform="rotate(225)"/><rect x="-1.3" y="-5.9" width="2.6" height="3" transform="rotate(270)"/><rect x="-1.3" y="-5.9" width="2.6" height="3" transform="rotate(315)"/><path fill-rule="evenodd" d="M0 -4.5A4.5 4.5 0 1 0 0 4.5A4.5 4.5 0 1 0 0 -4.5ZM0 -2.2A2.2 2.2 0 1 1 0 2.2A2.2 2.2 0 1 1 0 -2.2Z"/></g></svg>
<div style="left:1062px;top:103px;width:434px;height:23px;background:#2b2b2b;"></div>
<svg style="left:1068.8px;top:112.10000000000001px;" width="8.4" height="5.2" viewBox="0 0 8.4 5.2"><path d="M0 0L8.4 0L4.2 5.2Z" fill="#8a8a8a"/></svg>
<div class="t" style="top:105.2px;height:18px;line-height:18px;font-size:11.5px;color:#ececec;letter-spacing:0.25px;left:1083px;">Monitor</div>
<div style="left:1062px;top:127px;width:434px;height:215px;background:#171616;"></div>
<svg style="left:1091px;top:131px" width="376" height="207" viewBox="0 0 376 207"><defs><pattern id="ckm1" width="16" height="16" patternUnits="userSpaceOnUse"><rect width="16" height="16" fill="#000"/><rect x="8" width="8" height="8" fill="#393939"/><rect y="8" width="8" height="8" fill="#393939"/></pattern><filter id="gm1" x="-10%" y="-400%" width="120%" height="900%"><feGaussianBlur stdDeviation="7.0 5.5"/></filter><filter id="em1" x="-10%" y="-300%" width="120%" height="700%"><feGaussianBlur stdDeviation="2.2"/></filter><filter id="sm1" x="-50%" y="-50%" width="200%" height="200%"><feGaussianBlur stdDeviation="0.60"/></filter><filter id="vm1" x="-400%" y="-5%" width="900%" height="110%"><feGaussianBlur stdDeviation="2.4"/></filter><linearGradient id="lgm1" x1="0" x2="1"><stop offset="0" stop-color="#22b9c6" stop-opacity="0.62"/><stop offset="0.5" stop-color="#22b9c6" stop-opacity="0.34"/><stop offset="1" stop-color="#22b9c6" stop-opacity="0"/></linearGradient><clipPath id="cm1"><rect width="376" height="207"/></clipPath></defs><rect width="376" height="207" fill="url(#ckm1)"/><g clip-path="url(#cm1)"><rect x="-20.0" y="94.5" width="208.0" height="18.0" fill="url(#lgm1)" filter="url(#gm1)"/><path d="M-7.5 100.60L150.4 100.70L173.0 101.50L188.0 102.20L210.6 103.06L233.1 103.87L246.3 104.43L246.3 104.43L233.1 104.57L210.6 104.66L188.0 104.80L173.0 105.50L150.4 106.30L-7.5 106.40ZM253.8 104.22L278.2 103.57L308.3 102.60L330.9 101.66L349.7 101.05L383.5 100.76L383.5 106.16L349.7 106.25L330.9 105.86L308.3 105.20L278.2 104.57L253.8 104.22Z" fill="#10c4d4" filter="url(#em1)" opacity="0.7"/><path d="M185.04 45.5L185.80 74.5L186.51 103.5L187.98 149.0L190.10 209.1L195.30 209.1L191.78 149.0L189.11 103.5L187.20 74.5L185.54 45.5Z" fill="#10c4d4" filter="url(#vm1)" opacity="0.75"/><path d="M-7.5 100.60L150.4 100.70L173.0 101.50L188.0 102.20L210.6 103.06L233.1 103.87L246.3 104.43L246.3 104.43L233.1 104.57L210.6 104.66L188.0 104.80L173.0 105.50L150.4 106.30L-7.5 106.40ZM253.8 104.22L278.2 103.57L308.3 102.60L330.9 101.66L349.7 101.05L383.5 100.76L383.5 106.16L349.7 106.25L330.9 105.86L308.3 105.20L278.2 104.57L253.8 104.22ZM181.89 -2.1L182.96 16.6L184.25 35.2L184.75 35.2L184.76 16.6L184.49 -2.1ZM185.04 45.5L185.80 74.5L186.51 103.5L187.98 149.0L190.10 209.1L195.30 209.1L191.78 149.0L189.11 103.5L187.20 74.5L185.54 45.5Z" fill="#12f4fa" filter="url(#sm1)"/><circle cx="187.8" cy="103.5" r="1.5" fill="#8ffbff" filter="url(#sm1)"/></g></svg>
<div style="left:1062px;top:343px;width:434px;height:23px;background:#2b2b2b;"></div>
<svg style="left:1069.8px;top:350.1px;" width="6" height="8.4" viewBox="0 0 6 8.4"><path d="M0 0L6 4.2L0 8.4Z" fill="#8a8a8a"/></svg>
<div class="t" style="top:345.2px;height:18px;line-height:18px;font-size:11.5px;color:#ececec;letter-spacing:0.25px;left:1083px;">Dashboard</div>
<div style="left:1062px;top:367px;width:434px;height:23px;background:#2b2b2b;"></div>
<svg style="left:1068.8px;top:376.09999999999997px;" width="8.4" height="5.2" viewBox="0 0 8.4 5.2"><path d="M0 0L8.4 0L4.2 5.2Z" fill="#8a8a8a"/></svg>
<div class="t" style="top:369.2px;height:18px;line-height:18px;font-size:11.5px;color:#ececec;letter-spacing:0.25px;left:1083px;">Transport</div>
<div class="t" style="top:369.0px;height:18px;line-height:18px;font-size:11.5px;color:#ececec;letter-spacing:-0.05px;right:448px;text-align:right;">Timeline</div>
<svg style="left:1479px;top:376px;" width="8" height="5" viewBox="0 0 8 5"><path d="M0 0H8L4 4.6Z" fill="#fff"/></svg>
<div style="left:1062px;top:391px;width:86px;height:23px;background:#171616;"></div>
<div style="left:1149px;top:391px;width:347px;height:23px;background:#171616;"></div>
<div class="t" style="top:393.2px;height:18px;line-height:18px;font-size:11.5px;color:#ececec;letter-spacing:0.25px;right:774.5px;text-align:right;">Duration</div>
<div class="t" style="top:393.2px;height:18px;line-height:18px;font-size:11.5px;color:#ececec;letter-spacing:0.25px;left:1154px;">5 s</div>
<div class="t" style="top:393.0px;height:18px;line-height:18px;font-size:11.5px;color:#ececec;letter-spacing:0.25px;left:1206.0px;width:20px;text-align:center;">-</div>
<svg style="left:1234px;top:399px;" width="8" height="8" viewBox="0 0 8 8"><path d="M4 0.5V7.5M0.5 4H7.5" stroke="#e8e8e8" stroke-width="1.1" fill="none"/></svg>
<div style="left:1062px;top:415px;width:434px;height:47px;background:#2d584a;"></div>
<div style="left:1148.3px;top:415px;width:1.5px;height:47px;background:#060606;"></div>
<svg style="left:1069px;top:424.2px;" width="8" height="5" viewBox="0 0 8 5"><path d="M0 0L8 0L4 5Z" fill="#8a9d95"/></svg>
<div style="left:1094px;top:419px;width:49px;height:38px;background:#2c5648;box-sizing:border-box;border:1px solid #6a8279;"></div>
<svg style="left:1104.5px;top:424px;" width="28" height="28" viewBox="0 0 28 28"><path d="M14 0.4L27.6 14L14 27.6L0.4 14Z" fill="#37574a"/><rect x="6.3" y="6.3" width="15.4" height="15.4" fill="#62c9a8"/><path d="M14 6.5L21.5 14L14 21.5L6.5 14Z" fill="#82f8d1"/></svg>
<div class="t" style="top:415.0px;height:18px;line-height:18px;font-size:11px;color:#a0b5ad;left:1157px;">Video Router</div>
<svg style="left:1454.5px;top:423px;" width="9.5" height="9.5" viewBox="0 0 9.5 9.5"><path d="M2 7.5L7.5 2" stroke="#fff" stroke-width="1.5" fill="none"/><path d="M4.6 0.2H9.3V4.9ZM0.2 4.6V9.3H4.9Z" fill="#fff"/></svg>
<svg style="left:1479.1px;top:422.70000000000005px;" width="9.8" height="9.8" viewBox="0 0 9.8 9.8"><path d="M1 1L8.8 8.8M8.8 1L1 8.8" stroke="#fff" stroke-width="1.3" fill="none"/></svg>
<div style="left:1428px;top:441px;width:64px;height:16px;background:#7ff8ce;border-radius:3px;"></div>
<div class="t" style="top:440.6px;height:18px;line-height:18px;font-size:8.5px;color:#115540;font-weight:bold;left:1427.2px;width:20px;text-align:center;">R</div>
<div class="t" style="top:440.6px;height:18px;line-height:18px;font-size:8.5px;color:#115540;font-weight:bold;left:1442.2px;width:20px;text-align:center;">G</div>
<div class="t" style="top:440.6px;height:18px;line-height:18px;font-size:8.5px;color:#115540;font-weight:bold;left:1458.2px;width:20px;text-align:center;">B</div>
<div class="t" style="top:440.6px;height:18px;line-height:18px;font-size:8.5px;color:#115540;font-weight:bold;left:1473.2px;width:20px;text-align:center;">A</div>
<div style="left:1062px;top:463px;width:86px;height:23px;background:#171616;"></div>
<div style="left:1149px;top:463px;width:347px;height:23px;background:#171616;"></div>
<div class="t" style="top:465.2px;height:18px;line-height:18px;font-size:11.5px;color:#ececec;letter-spacing:0.25px;right:774.5px;text-align:right;">Opacity</div>
<div class="t" style="top:465.2px;height:18px;line-height:18px;font-size:11.5px;color:#ececec;letter-spacing:0.25px;left:1154px;">100 %</div>
<div style="left:1205px;top:466px;width:284px;height:17px;background:#0a0a0a;"></div>
<div style="left:1205px;top:466px;width:280px;height:17px;background:#2b2b2b;"></div>
<div style="left:1485px;top:466px;width:4px;height:17px;background:#4d917a;"></div>
<div style="left:1062px;top:487px;width:86px;height:23px;background:#171616;"></div>
<div style="left:1149px;top:487px;width:347px;height:23px;background:#171616;"></div>
<div class="t" style="top:489.2px;height:18px;line-height:18px;font-size:11.5px;color:#ececec;letter-spacing:0.25px;right:774.5px;text-align:right;">Width</div>
<div class="t" style="top:489.2px;height:18px;line-height:18px;font-size:11.5px;color:#ececec;letter-spacing:0.25px;left:1154px;">1920</div>
<div class="t" style="top:489.0px;height:18px;line-height:18px;font-size:11.5px;color:#ececec;letter-spacing:0.25px;left:1206.0px;width:20px;text-align:center;">-</div>
<svg style="left:1234px;top:495px;" width="8" height="8" viewBox="0 0 8 8"><path d="M4 0.5V7.5M0.5 4H7.5" stroke="#e8e8e8" stroke-width="1.1" fill="none"/></svg>
<div style="left:1062px;top:511px;width:86px;height:23px;background:#171616;"></div>
<div style="left:1149px;top:511px;width:347px;height:23px;background:#171616;"></div>
<div class="t" style="top:513.2px;height:18px;line-height:18px;font-size:11.5px;color:#ececec;letter-spacing:0.25px;right:774.5px;text-align:right;">Height</div>
<div class="t" style="top:513.2px;height:18px;line-height:18px;font-size:11.5px;color:#ececec;letter-spacing:0.25px;left:1154px;">1080</div>
<div class="t" style="top:513.0px;height:18px;line-height:18px;font-size:11.5px;color:#ececec;letter-spacing:0.25px;left:1206.0px;width:20px;text-align:center;">-</div>
<svg style="left:1234px;top:519px;" width="8" height="8" viewBox="0 0 8 8"><path d="M4 0.5V7.5M0.5 4H7.5" stroke="#e8e8e8" stroke-width="1.1" fill="none"/></svg>
<div style="left:1062px;top:535px;width:86px;height:23px;background:#171616;"></div>
<div style="left:1149px;top:535px;width:347px;height:23px;background:#171616;"></div>
<div class="t" style="top:537.2px;height:18px;line-height:18px;font-size:11.5px;color:#ececec;letter-spacing:-0.2px;right:774.5px;text-align:right;">Blend Mode</div>
<div class="t" style="top:537.2px;height:18px;line-height:18px;font-size:11.5px;color:#ececec;letter-spacing:0.25px;left:1154px;">Layer Determined</div>
<svg style="left:1260.5px;top:544px;" width="8" height="5" viewBox="0 0 8 5"><path d="M0 0H8L4 4.6Z" fill="#fff"/></svg>
<div style="left:1062px;top:559px;width:86px;height:23px;background:#171616;"></div>
<div style="left:1149px;top:559px;width:347px;height:23px;background:#171616;"></div>
<div class="t" style="top:561.2px;height:18px;line-height:18px;font-size:11.5px;color:#ececec;letter-spacing:0.25px;right:774.5px;text-align:right;">Input</div>
<div class="t" style="top:561.2px;height:18px;line-height:18px;font-size:11.5px;color:#ececec;letter-spacing:0.25px;left:1154px;">Group 1</div>
<svg style="left:1209.5px;top:568px;" width="8" height="5" viewBox="0 0 8 5"><path d="M0 0H8L4 4.6Z" fill="#fff"/></svg>
<div style="left:1062px;top:583px;width:86px;height:23px;background:#171616;"></div>
<div style="left:1149px;top:583px;width:347px;height:23px;background:#171616;"></div>
<div class="t" style="top:585.2px;height:18px;line-height:18px;font-size:10.5px;color:#ececec;letter-spacing:-0.1px;right:774.5px;text-align:right;">Input Opacity</div>
<div style="left:1153px;top:588px;width:13px;height:13px;background:#1b1b1b;border-radius:3px;box-sizing:border-box;border:1px solid #5c5c5c;"></div>
<div style="left:1062px;top:607px;width:86px;height:23px;background:#171616;"></div>
<div style="left:1149px;top:607px;width:347px;height:23px;background:#171616;"></div>
<div class="t" style="top:609.2px;height:18px;line-height:18px;font-size:10.5px;color:#ececec;letter-spacing:-0.55px;right:774.5px;text-align:right;">Input Bypas...</div>
<div style="left:1153px;top:612px;width:13px;height:13px;background:#7cf5c9;border-radius:3px;box-sizing:border-box;border:1px solid #4e5e58;"></div>
<div style="left:1062px;top:631px;width:386px;height:23px;background:#2d584a;"></div>
<svg style="left:1069px;top:640.2px;" width="8" height="5" viewBox="0 0 8 5"><path d="M0 0L8 0L4 5Z" fill="#8a9d95"/></svg>
<div class="t" style="top:633.2px;height:18px;line-height:18px;font-size:11.5px;color:#ececec;letter-spacing:0.25px;left:1083px;">Transform</div>
<div style="left:1449px;top:631px;width:22px;height:23px;background:#2d584a;"></div>
<div class="t" style="top:633.0px;height:18px;line-height:18px;font-size:11px;color:#ececec;left:1449.0px;width:22px;text-align:center;">P.</div>
<div style="left:1473px;top:631px;width:23px;height:23px;background:#2d584a;"></div>
<svg style="left:1479px;top:638px;" width="10" height="8" viewBox="0 0 10 8"><path d="M0 0.5H10M0 4H10M0 7.5H10" stroke="#fff" stroke-width="1.2"/></svg>
<div style="left:1062px;top:655px;width:86px;height:23px;background:#171616;"></div>
<div style="left:1149px;top:655px;width:347px;height:23px;background:#171616;"></div>
<div class="t" style="top:657.2px;height:18px;line-height:18px;font-size:11.5px;color:#ececec;letter-spacing:0.08px;right:774.5px;text-align:right;">Position X</div>
<div class="t" style="top:657.2px;height:18px;line-height:18px;font-size:11.5px;color:#ececec;letter-spacing:0.25px;left:1154px;">0</div>
<div class="t" style="top:657.0px;height:18px;line-height:18px;font-size:11.5px;color:#ececec;letter-spacing:0.25px;left:1206.0px;width:20px;text-align:center;">-</div>
<svg style="left:1234px;top:663px;" width="8" height="8" viewBox="0 0 8 8"><path d="M4 0.5V7.5M0.5 4H7.5" stroke="#e8e8e8" stroke-width="1.1" fill="none"/></svg>
<div style="left:1062px;top:679px;width:86px;height:23px;background:#171616;"></div>
<div style="left:1149px;top:679px;width:347px;height:23px;background:#171616;"></div>
<div class="t" style="top:681.2px;height:18px;line-height:18px;font-size:11.5px;color:#ececec;letter-spacing:0.08px;right:774.5px;text-align:right;">Position Y</div>
<div class="t" style="top:681.2px;height:18px;line-height:18px;font-size:11.5px;color:#ececec;letter-spacing:0.25px;left:1154px;">0</div>
<div class="t" style="top:681.0px;height:18px;line-height:18px;font-size:11.5px;color:#ececec;letter-spacing:0.25px;left:1206.0px;width:20px;text-align:center;">-</div>
<svg style="left:1234px;top:687px;" width="8" height="8" viewBox="0 0 8 8"><path d="M4 0.5V7.5M0.5 4H7.5" stroke="#e8e8e8" stroke-width="1.1" fill="none"/></svg>
<div style="left:1062px;top:703px;width:86px;height:23px;background:#171616;"></div>
<div style="left:1149px;top:703px;width:347px;height:23px;background:#171616;"></div>
<svg style="left:1069.8px;top:710.0999999999999px;" width="6" height="8.4" viewBox="0 0 6 8.4"><path d="M0 0L6 4.2L0 8.4Z" fill="#8a8a8a"/></svg>
<div class="t" style="top:705.2px;height:18px;line-height:18px;font-size:11.5px;color:#ececec;letter-spacing:0.25px;left:1083px;">Scale</div>
<div class="t" style="top:705.2px;height:18px;line-height:18px;font-size:11.5px;color:#ececec;letter-spacing:0.25px;left:1154px;">100 %</div>
<div style="left:1205px;top:706px;width:284px;height:17px;background:#0a0a0a;"></div>
<div style="left:1205px;top:706px;width:28px;height:17px;background:#2b2b2b;"></div>
<div style="left:1233px;top:706px;width:4px;height:17px;background:#4d917a;"></div>
<div style="left:1062px;top:727px;width:86px;height:23px;background:#171616;"></div>
<div style="left:1149px;top:727px;width:347px;height:23px;background:#171616;"></div>
<svg style="left:1069.8px;top:734.0999999999999px;" width="6" height="8.4" viewBox="0 0 6 8.4"><path d="M0 0L6 4.2L0 8.4Z" fill="#8a8a8a"/></svg>
<div class="t" style="top:729.2px;height:18px;line-height:18px;font-size:11.5px;color:#ececec;letter-spacing:0.25px;left:1083px;">Rotation</div>
<div class="t" style="top:729.2px;height:18px;line-height:18px;font-size:11.5px;color:#ececec;letter-spacing:0.25px;left:1154px;">0 °</div>
<div style="left:1205px;top:730px;width:284px;height:17px;background:#0a0a0a;"></div>
<div style="left:1205px;top:730px;width:140px;height:17px;background:#0a0a0a;"></div>
<div style="left:1345px;top:730px;width:4px;height:17px;background:#4d917a;"></div>
<div style="left:1062px;top:751px;width:86px;height:23px;background:#171616;"></div>
<div style="left:1149px;top:751px;width:347px;height:23px;background:#171616;"></div>
<svg style="left:1069.8px;top:758.0999999999999px;" width="6" height="8.4" viewBox="0 0 6 8.4"><path d="M0 0L6 4.2L0 8.4Z" fill="#8a8a8a"/></svg>
<div class="t" style="top:753.2px;height:18px;line-height:18px;font-size:11.5px;color:#ececec;letter-spacing:0.25px;left:1083px;">Anchor</div>
<div class="t" style="top:753.2px;height:18px;line-height:18px;font-size:11.5px;color:#ececec;letter-spacing:0.25px;left:1154px;">0</div>
<div style="left:1205px;top:754px;width:284px;height:17px;background:#0a0a0a;"></div>
<div style="left:1205px;top:754px;width:140px;height:17px;background:#0a0a0a;"></div>
<div style="left:1345px;top:754px;width:4px;height:17px;background:#4d917a;"></div>
<div class="t" style="top:887.0px;height:18px;line-height:18px;font-size:11.5px;color:#242323;letter-spacing:0.34px;left:1151px;">Drop audio, video, mask, source or effect here.</div>
<div style="left:1499px;top:45px;width:417px;height:972px;background:#0c0b0b;"></div>
<div style="left:1499px;top:45px;width:417px;height:21px;background:#2b2b2b;border-radius:3px 0 0 0;"></div>
<div class="t" style="top:46.0px;height:18px;line-height:18px;font-size:11.5px;color:#dcdcdc;left:1658.0px;width:100px;text-align:center;">Group</div>
<div style="left:1499px;top:67px;width:417px;height:35px;background:#161414;"></div>
<div style="left:1507px;top:76px;width:123px;height:18px;background:#070606;box-sizing:border-box;border:1px solid #666;"></div>
<div class="t" style="top:76.0px;height:18px;line-height:18px;font-size:11.5px;color:#ececec;letter-spacing:0.25px;left:1512px;">Group 1</div>
<svg style="left:1889.5px;top:78.5px;" width="14" height="14" viewBox="0 0 14 14"><g transform="translate(7 7)" fill="#cfcfcf"><rect x="-1.3" y="-5.9" width="2.6" height="3" transform="rotate(0)"/><rect x="-1.3" y="-5.9" width="2.6" height="3" transform="rotate(45)"/><rect x="-1.3" y="-5.9" width="2.6" height="3" transform="rotate(90)"/><rect x="-1.3" y="-5.9" width="2.6" height="3" transform="rotate(135)"/><rect x="-1.3" y="-5.9" width="2.6" height="3" transform="rotate(180)"/><rect x="-1.3" y="-5.9" width="2.6" height="3" transform="rotate(225)"/><rect x="-1.3" y="-5.9" width="2.6" height="3" transform="rotate(270)"/><rect x="-1.3" y="-5.9" width="2.6" height="3" transform="rotate(315)"/><path fill-rule="evenodd" d="M0 -4.5A4.5 4.5 0 1 0 0 4.5A4.5 4.5 0 1 0 0 -4.5ZM0 -2.2A2.2 2.2 0 1 1 0 2.2A2.2 2.2 0 1 1 0 -2.2Z"/></g></svg>
<div style="left:1499px;top:103px;width:417px;height:23px;background:#2b2b2b;"></div>
<svg style="left:1505.8px;top:112.10000000000001px;" width="8.4" height="5.2" viewBox="0 0 8.4 5.2"><path d="M0 0L8.4 0L4.2 5.2Z" fill="#8a8a8a"/></svg>
<div class="t" style="top:105.2px;height:18px;line-height:18px;font-size:11.5px;color:#ececec;letter-spacing:0.25px;left:1520px;">Monitor</div>
<div style="left:1499px;top:127px;width:417px;height:167px;background:#171616;"></div>
<svg style="left:1564px;top:131px" width="290" height="159" viewBox="0 0 290 159"><defs><pattern id="ckm2" width="16" height="16" patternUnits="userSpaceOnUse"><rect width="16" height="16" fill="#000"/><rect x="8" width="8" height="8" fill="#393939"/><rect y="8" width="8" height="8" fill="#393939"/></pattern><filter id="gm2" x="-10%" y="-400%" width="120%" height="900%"><feGaussianBlur stdDeviation="5.4 4.2"/></filter><filter id="em2" x="-10%" y="-300%" width="120%" height="700%"><feGaussianBlur stdDeviation="1.7"/></filter><filter id="sm2" x="-50%" y="-50%" width="200%" height="200%"><feGaussianBlur stdDeviation="0.46"/></filter><filter id="vm2" x="-400%" y="-5%" width="900%" height="110%"><feGaussianBlur stdDeviation="1.9"/></filter><linearGradient id="lgm2" x1="0" x2="1"><stop offset="0" stop-color="#22b9c6" stop-opacity="0.62"/><stop offset="0.5" stop-color="#22b9c6" stop-opacity="0.34"/><stop offset="1" stop-color="#22b9c6" stop-opacity="0"/></linearGradient><clipPath id="cm2"><rect width="290" height="159"/></clipPath></defs><rect width="290" height="159" fill="url(#ckm2)"/><g clip-path="url(#cm2)"><rect x="-15.4" y="72.6" width="160.4" height="13.9" fill="url(#lgm2)" filter="url(#gm2)"/><path d="M-5.8 77.26L116.0 77.34L133.4 77.96L145.0 78.50L162.4 79.16L179.8 79.79L190.0 80.22L190.0 80.22L179.8 80.33L162.4 80.39L145.0 80.50L133.4 81.04L116.0 81.66L-5.8 81.74ZM195.8 80.05L214.6 79.56L237.8 78.80L255.2 78.08L269.7 77.61L295.8 77.38L295.8 81.55L269.7 81.62L255.2 81.32L237.8 80.81L214.6 80.33L195.8 80.05Z" fill="#10c4d4" filter="url(#em2)" opacity="0.7"/><path d="M142.72 35.0L143.30 57.2L143.85 79.5L144.98 114.5L146.62 160.6L150.63 160.6L147.92 114.5L145.86 79.5L144.38 57.2L143.10 35.0Z" fill="#10c4d4" filter="url(#vm2)" opacity="0.75"/><path d="M-5.8 77.26L116.0 77.34L133.4 77.96L145.0 78.50L162.4 79.16L179.8 79.79L190.0 80.22L190.0 80.22L179.8 80.33L162.4 80.39L145.0 80.50L133.4 81.04L116.0 81.66L-5.8 81.74ZM195.8 80.05L214.6 79.56L237.8 78.80L255.2 78.08L269.7 77.61L295.8 77.38L295.8 81.55L269.7 81.62L255.2 81.32L237.8 80.81L214.6 80.33L195.8 80.05ZM140.29 -1.6L141.12 12.7L142.11 27.0L142.50 27.0L142.50 12.7L142.29 -1.6ZM142.72 35.0L143.30 57.2L143.85 79.5L144.98 114.5L146.62 160.6L150.63 160.6L147.92 114.5L145.86 79.5L144.38 57.2L143.10 35.0Z" fill="#12f4fa" filter="url(#sm2)"/><circle cx="144.9" cy="79.5" r="1.2" fill="#8ffbff" filter="url(#sm2)"/></g></svg>
<div style="left:1499px;top:295px;width:417px;height:23px;background:#2b2b2b;"></div>
<svg style="left:1506.8px;top:302.1px;" width="6" height="8.4" viewBox="0 0 6 8.4"><path d="M0 0L6 4.2L0 8.4Z" fill="#8a8a8a"/></svg>
<div class="t" style="top:297.2px;height:18px;line-height:18px;font-size:11.5px;color:#ececec;letter-spacing:0.25px;left:1520px;">Dashboard</div>
<div style="left:1499px;top:319px;width:408px;height:23px;background:#2b2b2b;"></div>
<svg style="left:1505.8px;top:328.09999999999997px;" width="8.4" height="5.2" viewBox="0 0 8.4 5.2"><path d="M0 0L8.4 0L4.2 5.2Z" fill="#8a8a8a"/></svg>
<div class="t" style="top:321.2px;height:18px;line-height:18px;font-size:11.5px;color:#ececec;letter-spacing:0.25px;left:1520px;">Common</div>
<div style="left:1499px;top:343px;width:86px;height:23px;background:#171616;"></div>
<div style="left:1586px;top:343px;width:321px;height:23px;background:#171616;"></div>
<div class="t" style="top:345.2px;height:18px;line-height:18px;font-size:11.5px;color:#ececec;letter-spacing:0.25px;right:337.5px;text-align:right;">Master</div>
<div class="t" style="top:345.2px;height:18px;line-height:18px;font-size:11.5px;color:#ececec;letter-spacing:0.25px;left:1591px;">100 %</div>
<div style="left:1642px;top:346px;width:258px;height:17px;background:#0a0a0a;"></div>
<div style="left:1642px;top:346px;width:254px;height:17px;background:#2b2b2b;"></div>
<div style="left:1896px;top:346px;width:4px;height:17px;background:#4d917a;"></div>
<div style="left:1499px;top:367px;width:86px;height:23px;background:#171616;"></div>
<div style="left:1586px;top:367px;width:321px;height:23px;background:#171616;"></div>
<div class="t" style="top:369.2px;height:18px;line-height:18px;font-size:11.5px;color:#ececec;letter-spacing:0.25px;right:337.5px;text-align:right;">Speed</div>
<div class="t" style="top:369.2px;height:18px;line-height:18px;font-size:11.5px;color:#ececec;letter-spacing:0.25px;left:1591px;">1</div>
<div style="left:1642px;top:370px;width:258px;height:17px;background:#0a0a0a;"></div>
<div style="left:1642px;top:370px;width:25px;height:17px;background:#2b2b2b;"></div>
<div style="left:1667px;top:370px;width:4px;height:17px;background:#4d917a;"></div>
<div style="left:1499px;top:391px;width:408px;height:23px;background:#2b2b2b;"></div>
<svg style="left:1505.8px;top:400.09999999999997px;" width="8.4" height="5.2" viewBox="0 0 8.4 5.2"><path d="M0 0L8.4 0L4.2 5.2Z" fill="#8a8a8a"/></svg>
<div class="t" style="top:393.2px;height:18px;line-height:18px;font-size:11.5px;color:#ececec;letter-spacing:0.25px;left:1520px;">Video</div>
<div style="left:1499px;top:415px;width:86px;height:23px;background:#171616;"></div>
<div style="left:1586px;top:415px;width:321px;height:23px;background:#171616;"></div>
<div class="t" style="top:417.2px;height:18px;line-height:18px;font-size:11.5px;color:#ececec;letter-spacing:-0.2px;right:337.5px;text-align:right;">Blend Mode</div>
<div class="t" style="top:417.2px;height:18px;line-height:18px;font-size:11.5px;color:#ececec;letter-spacing:0.25px;left:1591px;">Alpha</div>
<svg style="left:1646.5px;top:424px;" width="8" height="5" viewBox="0 0 8 5"><path d="M0 0H8L4 4.6Z" fill="#fff"/></svg>
<div style="left:1499px;top:439px;width:86px;height:23px;background:#171616;"></div>
<div style="left:1586px;top:439px;width:321px;height:23px;background:#171616;"></div>
<div class="t" style="top:441.2px;height:18px;line-height:18px;font-size:11.5px;color:#ececec;letter-spacing:0.25px;right:337.5px;text-align:right;">Opacity</div>
<div class="t" style="top:441.2px;height:18px;line-height:18px;font-size:11.5px;color:#ececec;letter-spacing:0.25px;left:1591px;">100 %</div>
<div style="left:1642px;top:442px;width:258px;height:17px;background:#0a0a0a;"></div>
<div style="left:1642px;top:442px;width:254px;height:17px;background:#2b2b2b;"></div>
<div style="left:1896px;top:442px;width:4px;height:17px;background:#4d917a;"></div>
<div style="left:1499px;top:463px;width:86px;height:20px;background:#171616;"></div>
<div style="left:1586px;top:463px;width:321px;height:20px;background:#171616;"></div>
<div class="t" style="top:465.2px;height:18px;line-height:18px;font-size:11.5px;color:#ececec;letter-spacing:0.25px;right:337.5px;text-align:right;">Width</div>
<div class="t" style="top:465.2px;height:18px;line-height:18px;font-size:11.5px;color:#ececec;letter-spacing:0.25px;left:1591px;">1920</div>
<div class="t" style="top:465.0px;height:18px;line-height:18px;font-size:11.5px;color:#ececec;letter-spacing:0.25px;left:1643.0px;width:20px;text-align:center;">-</div>
<svg style="left:1671px;top:471px;" width="8" height="8" viewBox="0 0 8 8"><path d="M4 0.5V7.5M0.5 4H7.5" stroke="#e8e8e8" stroke-width="1.1" fill="none"/></svg>
<div style="left:1908px;top:319px;width:8px;height:164px;background:#1f1f1f;"></div>
<div style="left:1908px;top:319px;width:8px;height:79px;background:#2e2e2e;"></div>
<div style="left:1499px;top:483px;width:417px;height:3px;background:#000;"></div>
<div style="left:1499px;top:486px;width:139px;height:21px;background:#0c0b0b;border-radius:3px 3px 0 0;"></div>
<div style="left:1639px;top:486px;width:139px;height:21px;background:#2b2b2b;border-radius:3px 3px 0 0;"></div>
<div style="left:1779px;top:486px;width:137px;height:21px;background:#0c0b0b;border-radius:3px 0 0 0;"></div>
<div class="t" style="top:487.0px;height:18px;line-height:18px;font-size:11.5px;color:#dcdcdc;left:1508.0px;width:120px;text-align:center;">Files</div>
<div class="t" style="top:487.0px;height:18px;line-height:18px;font-size:11.5px;color:#dcdcdc;left:1648.0px;width:120px;text-align:center;">Sources</div>
<div class="t" style="top:487.0px;height:18px;line-height:18px;font-size:11.5px;color:#dcdcdc;left:1788.0px;width:120px;text-align:center;">Effects</div>
<div style="left:1499px;top:508px;width:417px;height:35px;background:#2b2b2b;"></div>
<div style="left:1513px;top:515px;width:393px;height:21px;background:#000;border-radius:4px;"></div>
<svg style="left:1522px;top:518px;" width="16" height="16" viewBox="0 0 16 16"><circle cx="6.3" cy="6.8" r="4.7" stroke="#7cf5c9" stroke-width="1.7" fill="none"/><path d="M9.9 10.3L13.4 13.2" stroke="#7cf5c9" stroke-width="2.2" stroke-linecap="butt"/></svg>
<svg style="left:1891px;top:521px;" width="8" height="8" viewBox="0 0 8 8"><path d="M1 1L7 7M7 1L1 7" stroke="#e0e0e0" stroke-width="1.1" fill="none"/></svg>
<div style="left:1499px;top:543px;width:417px;height:474px;background:#0c0b0b;"></div>
<div style="left:1908px;top:543px;width:8px;height:474px;background:#1f1f1f;"></div>
<div style="left:1908px;top:828px;width:8px;height:189px;background:#303030;"></div>
<div style="left:1531px;top:880px;width:376px;height:24px;background:#2b2b2b;"></div>
<div class="t" style="top:552.0px;height:18px;line-height:18px;font-size:11.5px;color:#ececec;letter-spacing:0.25px;left:1534px;">Shaper</div>
<div class="t" style="top:576.0px;height:18px;line-height:18px;font-size:11.5px;color:#ececec;letter-spacing:0.25px;left:1534px;">Solid Color</div>
<div class="t" style="top:600.0px;height:18px;line-height:18px;font-size:11.5px;color:#ececec;letter-spacing:0.25px;left:1534px;">Static</div>
<div class="t" style="top:624.0px;height:18px;line-height:18px;font-size:11.5px;color:#ececec;letter-spacing:0.25px;left:1534px;">Stroboscope</div>
<svg style="left:1521px;top:631.0px;" width="8" height="5" viewBox="0 0 8 5"><path d="M0 0L8 0L4 5Z" fill="#858585"/></svg>
<div class="t" style="top:647.0px;height:18px;line-height:18px;font-size:11px;color:#8f8f8f;left:1554px;">Fast</div>
<div class="t" style="top:671.0px;height:18px;line-height:18px;font-size:11px;color:#8f8f8f;left:1554px;">Heartbeat</div>
<div class="t" style="top:696.0px;height:18px;line-height:18px;font-size:11.5px;color:#ececec;letter-spacing:0.25px;left:1534px;">Text Animator</div>
<svg style="left:1521px;top:703.0px;" width="8" height="5" viewBox="0 0 8 5"><path d="M0 0L8 0L4 5Z" fill="#858585"/></svg>
<div class="t" style="top:719.0px;height:18px;line-height:18px;font-size:11px;color:#8f8f8f;left:1554px;">Dangle</div>
<div class="t" style="top:743.0px;height:18px;line-height:18px;font-size:11px;color:#8f8f8f;left:1554px;">Flickr</div>
<div class="t" style="top:767.0px;height:18px;line-height:18px;font-size:11px;color:#8f8f8f;left:1554px;">One Shot</div>
<div class="t" style="top:791.0px;height:18px;line-height:18px;font-size:11px;color:#8f8f8f;left:1554px;">Type On &amp; Off</div>
<div class="t" style="top:815.0px;height:18px;line-height:18px;font-size:11px;color:#8f8f8f;left:1554px;">Wave</div>
<div class="t" style="top:840.0px;height:18px;line-height:18px;font-size:11.5px;color:#ececec;letter-spacing:0.25px;left:1534px;">Text Block</div>
<div class="t" style="top:862.0px;height:18px;line-height:18px;font-size:11.5px;color:#ececec;letter-spacing:0.25px;left:1514px;">Routing</div>
<svg style="left:1501px;top:869.0px;" width="8" height="5" viewBox="0 0 8 5"><path d="M0 0L8 0L4 5Z" fill="#858585"/></svg>
<div class="t" style="top:884.0px;height:18px;line-height:18px;font-size:11.5px;color:#ececec;letter-spacing:0.25px;left:1534px;">Video Router</div>
<div class="t" style="top:906.0px;height:18px;line-height:18px;font-size:11.5px;color:#ececec;letter-spacing:0.25px;left:1514px;">Capture Devices</div>
<svg style="left:1501px;top:913.0px;" width="8" height="5" viewBox="0 0 8 5"><path d="M0 0L8 0L4 5Z" fill="#858585"/></svg>
<div class="t" style="top:928.0px;height:18px;line-height:18px;font-size:11.5px;color:#ececec;letter-spacing:0.25px;left:1534px;">DeckLink UltraStudio Mini Recorder</div>
<div class="t" style="top:952.0px;height:18px;line-height:18px;font-size:11.5px;color:#ececec;letter-spacing:-0.05px;left:1534px;">USB2.0 HD UVC WebCam</div>
<div class="t" style="top:974.0px;height:18px;line-height:18px;font-size:11.5px;color:#ececec;letter-spacing:0.25px;left:1514px;">Spout Servers</div>
<svg style="left:1501px;top:981.0px;" width="8" height="5" viewBox="0 0 8 5"><path d="M0 0L8 0L4 5Z" fill="#858585"/></svg>
<div class="t" style="top:996.0px;height:18px;line-height:18px;font-size:11.5px;color:#ececec;letter-spacing:0.25px;left:1534px;">Arena - Composition</div>
<div style="left:0px;top:1017px;width:1916px;height:23px;background:#2b2b2b;"></div>
<div class="t" style="top:1019.0px;height:18px;line-height:18px;font-size:11px;color:#ececec;left:9px;">Resolume Arena 6.0.0</div>
<div class="t" style="top:1019.0px;height:18px;line-height:18px;font-size:11.5px;color:#ececec;right:5px;text-align:right;">23:05</div>
<div style="left:0px;top:1040px;width:1916px;height:4px;background:#000;"></div>
<div style="left:442px;top:1040px;width:48px;height:4px;background:#333;"></div>
</div></body></html>
